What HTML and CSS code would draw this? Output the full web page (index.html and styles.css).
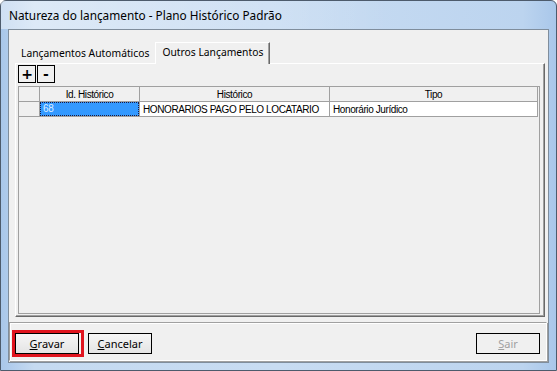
FILE: index.html
```html
<!DOCTYPE html>
<html lang="pt">
<head>
  <meta charset="UTF-8">
  <title>Natureza do lançamento - Plano Histórico Padrão</title>
  <link rel="stylesheet" href="styles.css">
</head>
<body>
  <div class="window">
    <div class="titlebar">Natureza do lançamento - Plano Histórico Padrão</div>
    <div class="client">
      <div class="tabs">
        <div class="tab-strip">
          <div class="tab">Lançamentos Automáticos</div>
          <div class="tab active">Outros Lançamentos</div>
        </div>
        <div class="tab-page">
          <div class="toolbar">
            <button class="mini">+</button>
            <button class="mini">-</button>
          </div>
          <div class="grid">
            <table>
              <thead>
                <tr>
                  <th class="ind"></th>
                  <th class="c-id">Id. Histórico</th>
                  <th class="c-hist">Histórico</th>
                  <th class="c-tipo">Tipo</th>
                </tr>
              </thead>
              <tbody>
                <tr>
                  <td class="ind"></td>
                  <td class="c-id selected"><span>68</span></td>
                  <td class="c-hist">HONORARIOS PAGO PELO LOCATARIO</td>
                  <td class="c-tipo">Honorário Jurídico</td>
                </tr>
              </tbody>
            </table>
          </div>
        </div>
      </div>
      <div class="actions">
        <div class="highlight">
          <button class="btn"><u>G</u>ravar</button>
        </div>
        <button class="btn"><u>C</u>ancelar</button>
        <span class="spacer"></span>
        <button class="btn" disabled><u>S</u>air</button>
      </div>
    </div>
  </div>
</body>
</html>
```

FILE: styles.css
```css
html, body {
  margin: 0;
  padding: 0;
}
body {
  width: 557px;
  height: 371px;
  overflow: hidden;
  background: #fff;
  font-family: "Liberation Sans", Arial, sans-serif;
}
/* Aero frame */
.window {
  box-sizing: border-box;
  width: 557px;
  height: 371px;
  border: 1px solid #4d5b6c;
  border-radius: 6px 6px 0 0;
  background: linear-gradient(90deg, #a9c7ea 0%, #c5daf1 6%, #c8dcf2 50%, #bcd4ef 94%, #a9c7ea 100%);
  display: flex;
  flex-direction: column;
}
.titlebar {
  height: 28px;
  padding-left: 8px;
  display: flex;
  align-items: center;
  font-family: "Noto Sans", "Open Sans", sans-serif;
  font-size: 11.8px;
  color: #000;
  background: linear-gradient(90deg, rgba(255,255,255,0.45) 0%, rgba(255,255,255,0.2) 40%, rgba(255,255,255,0) 70%);
}
.client {
  box-sizing: border-box;
  margin: 0 7px;
  width: 541px;
  height: 334px;
  background: #f0f0f0;
  border: 1px solid #7f8d9c;
  display: flex;
  flex-direction: column;
  padding: 11px 0 0 6px;
}
/* Tab control */
.tabs {
  width: 530px;
  display: flex;
  flex-direction: column;
}
.tab-strip {
  display: flex;
  align-items: flex-end;
  height: 22px;
  padding-left: 2px;
}
.tab {
  font-family: "Noto Sans", "Open Sans", sans-serif;
  font-size: 10.3px;
  height: 20px;
  line-height: 20px;
  padding: 0 4px;
  color: #000;
}
.tab.active {
  height: 21px;
  line-height: 18px;
  margin-left: 2px;
  padding: 0 6px;
  background: #f0f0f0;
  border-top: 1px solid #fff;
  border-left: 1px solid #fff;
  border-right: 1px solid #696969;
  box-shadow: inset -1px 0 0 #a0a0a0;
  position: relative;
  top: 1px;
}
.tab-page {
  box-sizing: border-box;
  height: 254px;
  border: 1px solid;
  border-color: #fff #696969 #696969 #fff;
  box-shadow: inset -1px -1px 0 #a0a0a0;
  padding: 1px 4px 2px 2px;
  display: flex;
  flex-direction: column;
}
.toolbar {
  display: flex;
  gap: 1px;
  height: 19px;
  margin-bottom: 2px;
}
.mini {
  box-sizing: border-box;
  width: 18px;
  height: 18px;
  padding: 0;
  margin: 0;
  border: 1px solid #000;
  background: #f0f0f0;
  font-family: "DejaVu Sans", sans-serif;
  font-weight: bold;
  font-size: 14px;
  line-height: 14px;
  color: #000;
}
/* Grid */
.grid {
  flex: 1;
  box-sizing: border-box;
  border: 1px solid #a0a0a0;
  background: #f0f0f0;
}
.grid table {
  border-collapse: collapse;
  table-layout: fixed;
  font-size: 10px;
  letter-spacing: -0.4px;
  color: #000;
}
.grid th, .grid td {
  height: 14px;
  padding: 0 3px;
  border-right: 1px solid #a0a0a0;
  border-bottom: 1px solid #a0a0a0;
  white-space: nowrap;
  overflow: hidden;
}
.grid th {
  font-weight: normal;
  text-align: center;
  background: #f0f0f0;
}
.grid td {
  background: #fff;
  text-align: left;
}
.grid .ind {
  width: 14px;
  background: #f0f0f0;
}
.grid .c-id { width: 93px; }
.grid .c-hist { width: 183px; }
.grid .c-tipo { width: 201px; }
.grid td.selected {
  padding: 0;
  background: #3399ff;
  color: #dceeff;
}
.grid td.selected span {
  display: block;
  height: 12px;
  line-height: 12px;
  padding: 0 2px;
  border: 1px dotted #1a1a40;
}
/* Bottom buttons */
.actions {
  box-sizing: border-box;
  margin: 5px 0 0 -6px;
  width: 538px;
  height: 39px;
  border: 1px solid;
  border-color: #a0a0a0 #fff #fff #a0a0a0;
  box-shadow: inset 1px 1px 0 #fff, 1px 1px 0 #a0a0a0;
  display: flex;
  align-items: center;
  padding: 4px 6px 0 2px;
  gap: 4px;
}
.highlight {
  border: 3px solid #e0141e;
  padding: 0 2px 0 0;
  display: flex;
}
.spacer { flex: 1; }
.btn {
  box-sizing: border-box;
  width: 64px;
  height: 21px;
  margin: 0;
  padding: 0;
  border: 1px solid #000;
  background: linear-gradient(#f6f6f6, #e4e4e4);
  font-family: "Noto Sans", "Open Sans", sans-serif;
  font-size: 11px;
  color: #000;
}
.btn:disabled {
  color: #a0a0a0;
  background: #f0f0f0;
}
```
